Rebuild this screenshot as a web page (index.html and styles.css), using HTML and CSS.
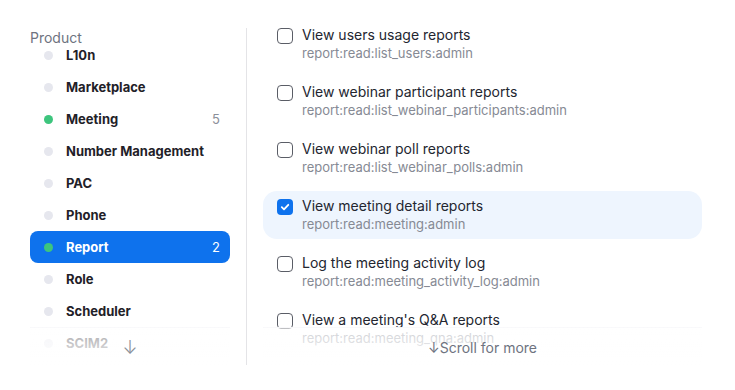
FILE: index.html
```html
<!DOCTYPE html>
<html>
<head>
    <title>Scopes</title>
    <meta name="viewport" content="width=device-width, initial-scale=1">
    <link rel="stylesheet" href="styles.css">
</head>
<body>

<div id="page-wrapper">
    <div id="sidebar">
        <div class="sidebar-label">Product</div>
        <ul class="product-list">
            <li class="product"><span class="dot"></span>L10n</li>
            <li class="product"><span class="dot"></span>Marketplace</li>
            <li class="product"><span class="dot on"></span>Meeting<span class="count">5</span></li>
            <li class="product"><span class="dot"></span>Number Management</li>
            <li class="product"><span class="dot"></span>PAC</li>
            <li class="product"><span class="dot"></span>Phone</li>
            <li class="product active"><span class="dot on"></span>Report<span class="count">2</span></li>
            <li class="product"><span class="dot"></span>Role</li>
            <li class="product"><span class="dot"></span>Scheduler</li>
            <li class="product"><span class="dot"></span>SCIM2</li>
        </ul>
        <div class="fade"><span class="arrow">↓</span></div>
    </div>

    <div id="scopes">
        <div class="scope">
            <span class="box"></span>
            <div class="scope-text">
                <div class="scope-title">View users usage reports</div>
                <div class="scope-id">report:read:list_users:admin</div>
            </div>
        </div>
        <div class="scope">
            <span class="box"></span>
            <div class="scope-text">
                <div class="scope-title">View webinar participant reports</div>
                <div class="scope-id">report:read:list_webinar_participants:admin</div>
            </div>
        </div>
        <div class="scope">
            <span class="box"></span>
            <div class="scope-text">
                <div class="scope-title">View webinar poll reports</div>
                <div class="scope-id">report:read:list_webinar_polls:admin</div>
            </div>
        </div>
        <div class="scope checked">
            <span class="box">
                <svg width="10" height="10" viewBox="0 0 10 10"><path d="M1.8 5.2 L4 7.3 L8.3 2.8" fill="none" stroke="#fff" stroke-width="1.8" stroke-linecap="round" stroke-linejoin="round"/></svg>
            </span>
            <div class="scope-text">
                <div class="scope-title">View meeting detail reports</div>
                <div class="scope-id">report:read:meeting:admin</div>
            </div>
        </div>
        <div class="scope">
            <span class="box"></span>
            <div class="scope-text">
                <div class="scope-title">Log the meeting activity log</div>
                <div class="scope-id">report:read:meeting_activity_log:admin</div>
            </div>
        </div>
        <div class="scope">
            <span class="box"></span>
            <div class="scope-text">
                <div class="scope-title">View a meeting's Q&amp;A reports</div>
                <div class="scope-id">report:read:meeting_qna:admin</div>
            </div>
        </div>
        <div class="fade"><span class="more">↓Scroll for more</span></div>
    </div>
</div>

</body>
</html>
```

FILE: styles.css
```css
html, body {
    margin: 0px;
    padding: 0px;
    background-color: #ffffff;
    font-family: "Inter", "Liberation Sans", sans-serif;
}

#page-wrapper {
    display: flex;
    align-items: flex-start;
    padding: 20px 0px 0px 30px;
    height: 345px;
    overflow: hidden;
}

#sidebar {
    position: relative;
    width: 200px;
    height: 337px;
    margin-top: 8px;
    padding-right: 16px;
    border-right: 1px solid #e4e4e7;
    overflow: hidden;
}

.sidebar-label {
    position: relative;
    z-index: 1;
    line-height: 18px;
    margin-top: 1px;
    font-size: 14px;
    color: #6e7380;
}

.product-list {
    list-style: none;
    margin: -8px 0px 0px 0px;
    padding: 0px;
}

.product {
    display: flex;
    align-items: center;
    height: 32px;
    padding: 0px 10px 0px 14px;
    border-radius: 8px;
    font-size: 13px;
    font-weight: 700;
    color: #1f2128;
}

.product.active {
    background: #0e72ed;
    color: #ffffff;
}

.dot {
    width: 9px;
    height: 9px;
    margin-right: 13px;
    border-radius: 50%;
    background: #e6e7ee;
}

.dot.on {
    background: #3dc57d;
}

.count {
    margin-left: auto;
    font-weight: 400;
    color: #8b8f99;
}

.product.active .count {
    color: #ffffff;
}

.fade {
    position: absolute;
    left: 0px;
    bottom: 0px;
    display: flex;
    justify-content: center;
    align-items: center;
    border-top: 1px solid rgba(240, 240, 244, 0.4);
    background: linear-gradient(rgba(255, 255, 255, 0.6), rgba(255, 255, 255, 0.95));
}

#sidebar .fade {
    width: 200px;
    height: 37px;
}

.arrow {
    margin-top: 2px;
    font-size: 18px;
    font-weight: 300;
    color: #8b8f99;
}

#scopes {
    position: relative;
    display: flex;
    flex-direction: column;
    gap: 9px;
    width: 439px;
    height: 345px;
    padding-left: 16px;
    overflow: hidden;
}

.scope {
    display: flex;
    align-items: flex-start;
    padding: 6px 14px;
    border-radius: 14px;
}

.scope.checked {
    background: #eef5fe;
}

.box {
    box-sizing: border-box;
    display: flex;
    justify-content: center;
    align-items: center;
    flex-shrink: 0;
    width: 16px;
    height: 16px;
    margin: 2px 9px 0px 0px;
    border: 1.5px solid #5a5d66;
    border-radius: 4px;
    background: #ffffff;
}

.scope.checked .box {
    border: none;
    background: #0e72ed;
}

.scope-title {
    line-height: 18px;
    font-size: 14px;
    color: #232630;
}

.scope-id {
    line-height: 18px;
    font-size: 13px;
    color: #868a94;
}

#scopes .fade {
    left: 16px;
    bottom: 0px;
    width: 439px;
    height: 37px;
}

.more {
    margin-top: 2px;
    font-size: 14px;
    color: #6e7380;
}
```
